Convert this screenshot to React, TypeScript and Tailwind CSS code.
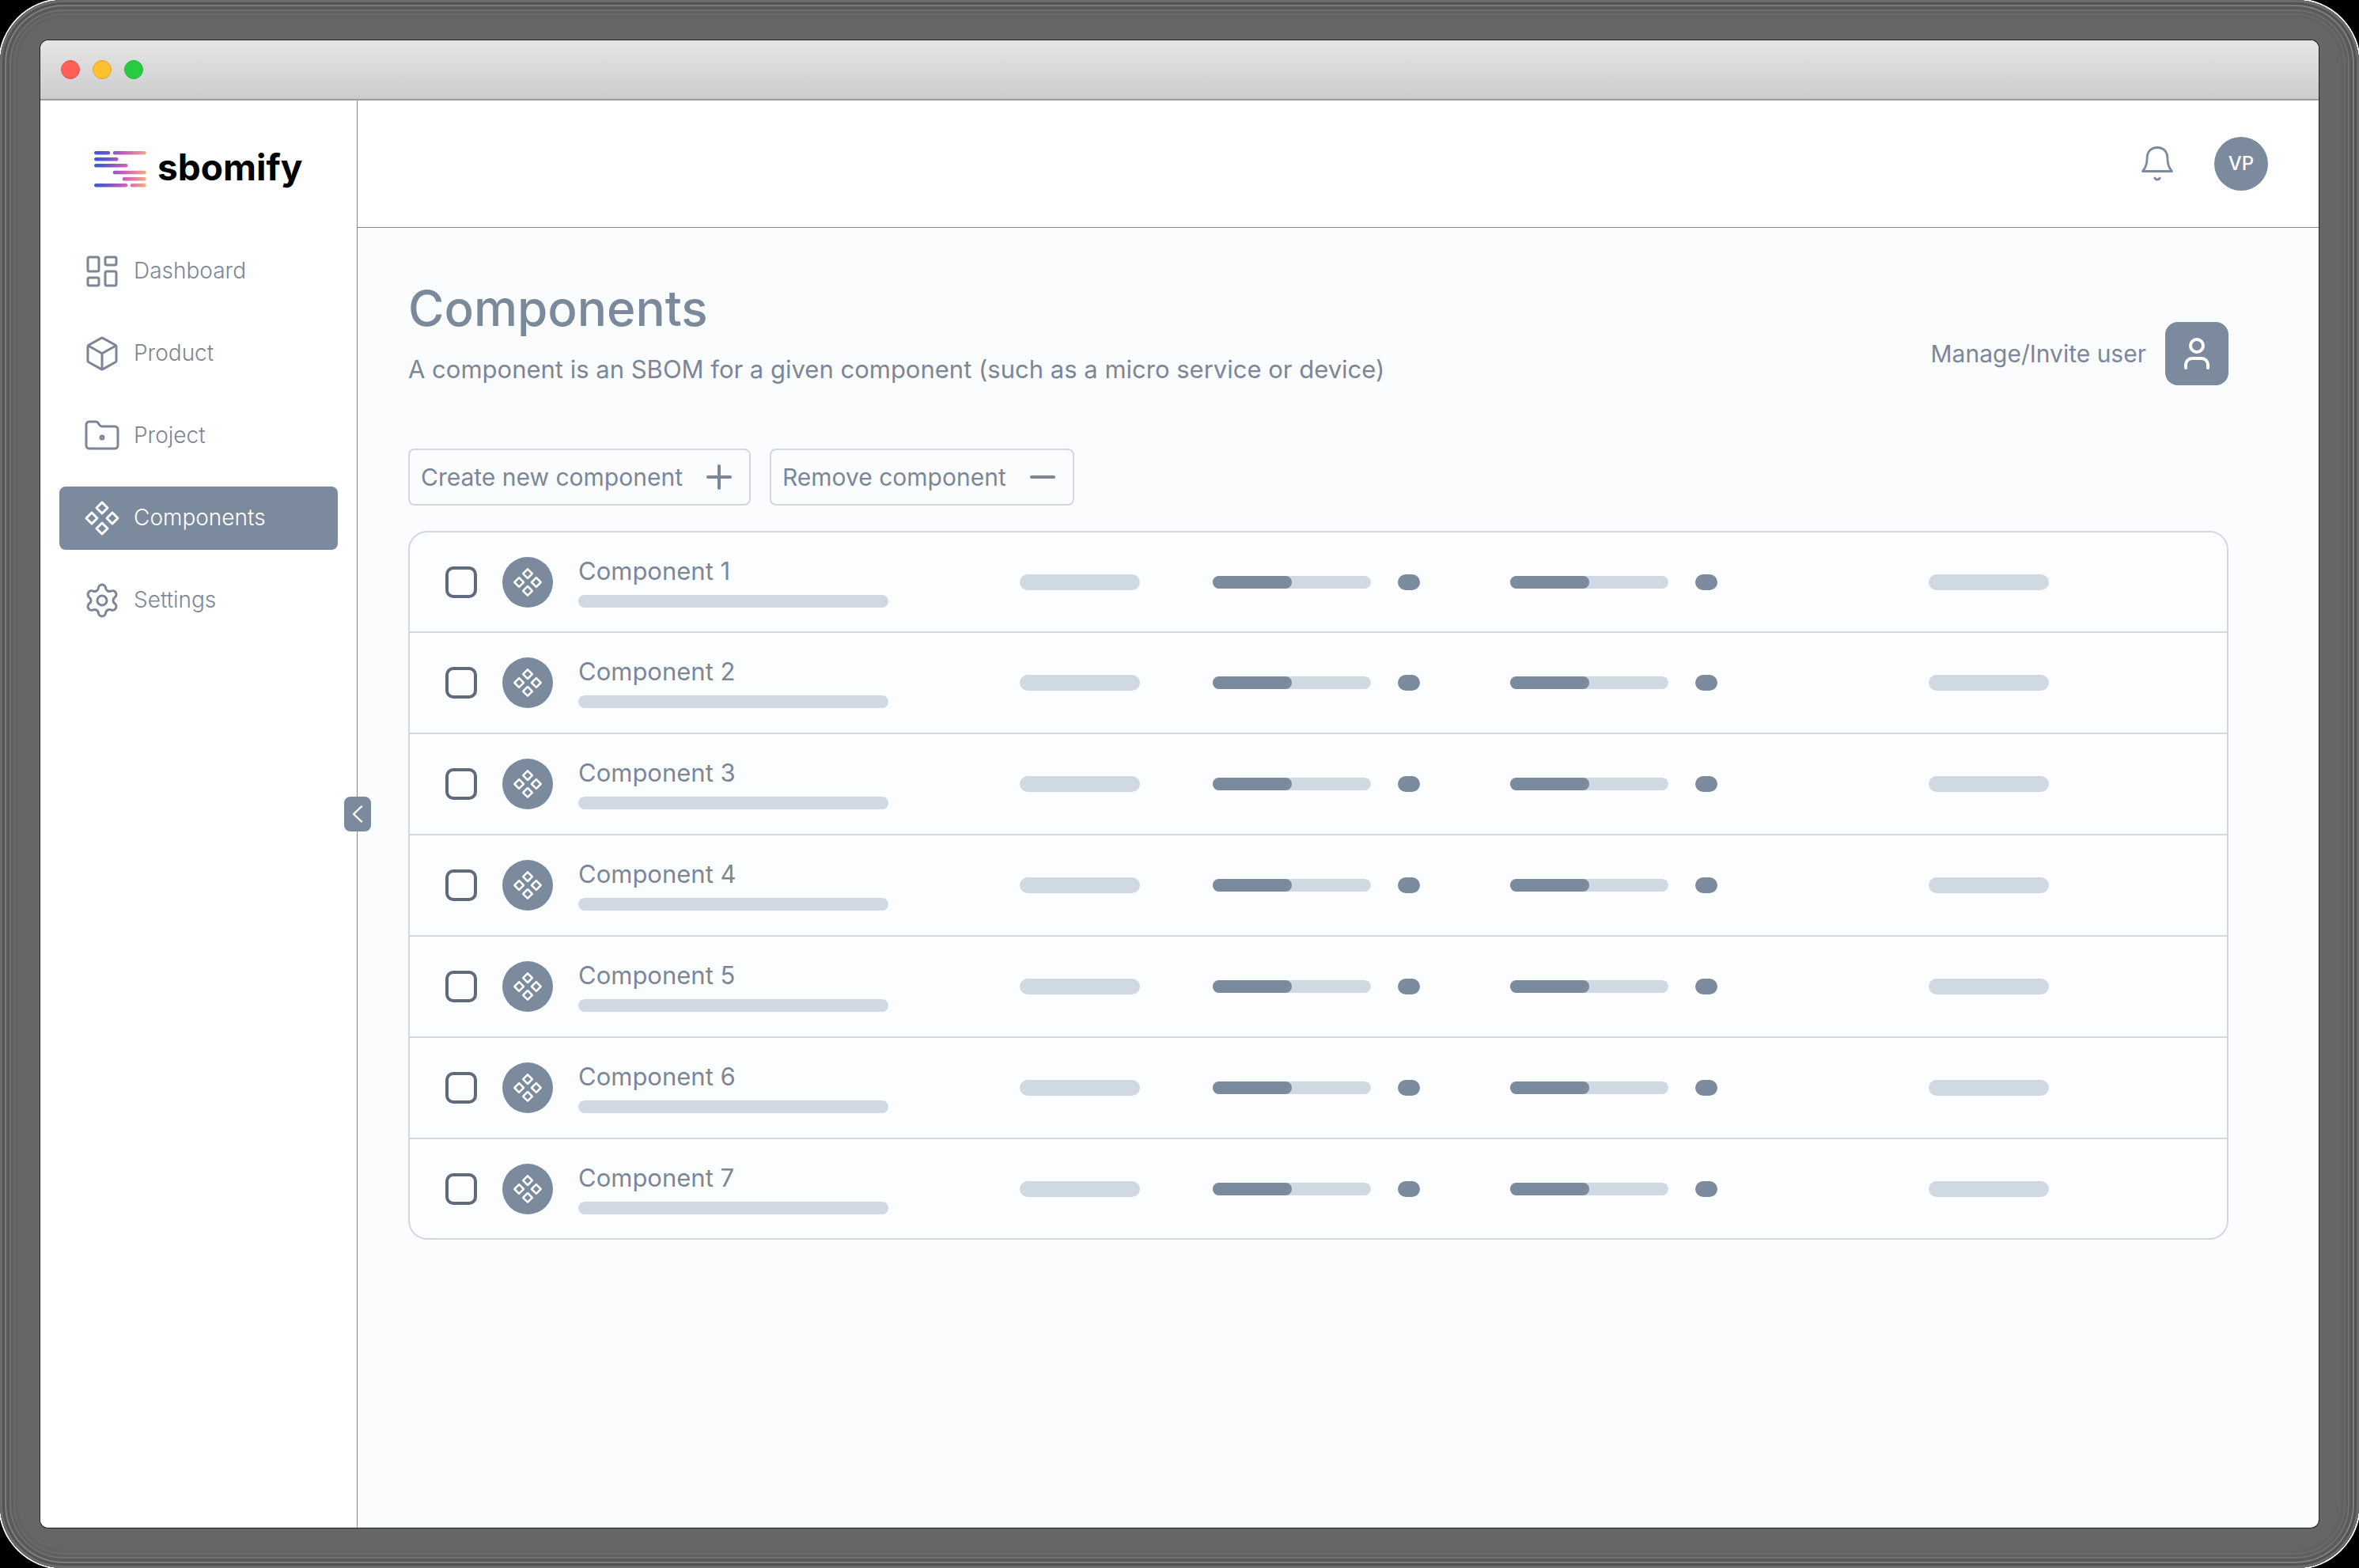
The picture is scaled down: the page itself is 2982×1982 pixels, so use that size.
import type { ReactNode } from "react";
import { FolderDot, LayoutDashboard, Settings, User } from "lucide-react";

function ComponentIcon({ className }: { className: string }) {
  return (
    <svg viewBox="0 0 24 24" fill="none" stroke="currentColor" strokeWidth="1.5" className={className} aria-hidden="true">
      <path d="M5.5 8.5 9 12l-3.5 3.5L2 12Z" strokeLinejoin="round" />
      <path d="m12 2 3.5 3.5L12 9 8.5 5.5Z" strokeLinejoin="round" />
      <path d="M18.5 8.5 22 12l-3.5 3.5L15 12Z" strokeLinejoin="round" />
      <path d="m12 15 3.5 3.5L12 22l-3.5-3.5Z" strokeLinejoin="round" />
    </svg>
  );
}

function BoxIcon({ className }: { className: string }) {
  return (
    <svg viewBox="0 0 24 24" fill="none" stroke="currentColor" strokeWidth="1.5" strokeLinecap="round" strokeLinejoin="round" className={className} aria-hidden="true">
      <path d="M11.5 2.2a1 1 0 0 1 1 0l8 4.45a1 1 0 0 1 .5.87v8.96a1 1 0 0 1-.5.87l-8 4.45a1 1 0 0 1-1 0l-8-4.45a1 1 0 0 1-.5-.87V7.52a1 1 0 0 1 .5-.87Z" />
      <path d="m3.3 7 8.7 4.9L20.7 7" />
      <path d="M12 21.8V11.9" />
    </svg>
  );
}

function BellIcon({ className }: { className: string }) {
  return (
    <svg viewBox="0 0 48 48" fill="none" stroke="currentColor" strokeWidth="2.8" strokeLinecap="round" strokeLinejoin="round" className={className} aria-hidden="true">
      <path d="M5.5 33.5h37c-4-4.500-5.600-10-5.600-16.500C36.900 8.500 31.500 3.500 24 3.500S11.100 8.500 11.100 17c0 6.500-1.600 12-5.600 16.500Z" />
      <path d="M20.8 42.2c.9 1.300 1.900 1.900 3.200 1.900s2.300-.6 3.200-1.900" strokeWidth="3" />
    </svg>
  );
}

function Logo() {
  return (
    <svg viewBox="0 0 66 48" fill="none" strokeWidth="4.6" strokeLinecap="round" stroke="url(#brand)" className="h-12 w-[66px]" aria-hidden="true">
      <defs>
        <linearGradient id="brand" gradientUnits="userSpaceOnUse" x1="0" y1="24" x2="66" y2="26">
          <stop offset="0" stopColor="#3f5bcc" />
          <stop offset="0.2" stopColor="#5b58cb" />
          <stop offset="0.55" stopColor="#c659b9" />
          <stop offset="0.75" stopColor="#de7aa6" />
          <stop offset="1" stopColor="#f3ad84" />
        </linearGradient>
      </defs>
      <path d="M2.3 2.3H18M26 2.3h37.500M2.3 10.300h26M2.3 18.300h38M26 27h37.500M38 35.300h25.500M2.3 43.300h37.700M48 43.300h15.500" />
    </svg>
  );
}

const navItems: { label: string; icon: ReactNode; active?: boolean }[] = [
  { label: "Dashboard", icon: <LayoutDashboard size={48} strokeWidth={1.5} /> },
  { label: "Product", icon: <BoxIcon className="size-12" /> },
  { label: "Project", icon: <FolderDot size={48} strokeWidth={1.5} /> },
  { label: "Components", icon: <ComponentIcon className="size-12" />, active: true },
  { label: "Settings", icon: <Settings size={48} strokeWidth={1.5} /> },
];

function TitleBar() {
  return (
    <div className="flex h-[76px] shrink-0 items-center gap-4 border-b-2 border-[#9c9c9c] bg-linear-to-b from-[#e6e6e6] to-[#cccccc] px-[26px]">
      <button aria-label="Close" className="size-6 rounded-full border border-[#e2554e] bg-[#ff5f57]" />
      <button aria-label="Minimize" className="size-6 rounded-full border border-[#e0a32e] bg-[#ffc02f]" />
      <button aria-label="Zoom" className="size-6 rounded-full border border-[#24b33a] bg-[#28cc42]" />
    </div>
  );
}

function Sidebar() {
  return (
    <aside className="relative flex w-[401px] shrink-0 flex-col border-r border-[#85888c] bg-white px-6">
      <a href="#home" className="mt-16 ml-11 flex h-12 items-start gap-3.5 text-black">
        <Logo />
        <span className="text-[46px] leading-10 font-bold">sbomify</span>
      </a>
      <nav className="mt-16 flex flex-col gap-6">
        {navItems.map((item) => (
          <a
            key={item.label}
            href={"#" + item.label.toLowerCase()}
            aria-current={item.active ? "page" : undefined}
            className={
              item.active
                ? "flex h-20 items-center gap-4 rounded-lg bg-[#7b8a9d] px-[30px] text-[28px] font-light text-white"
                : "flex h-20 items-center gap-4 rounded-lg px-[30px] text-[28px] font-light text-[#7d8696]"
            }
          >
            {item.icon}
            <span className="pb-0.5">{item.label}</span>
          </a>
        ))}
      </nav>
      <button
        aria-label="Collapse sidebar"
        className="absolute top-1/2 -right-px flex h-11 w-[34px] translate-x-1/2 -translate-y-1/2 items-center justify-center rounded-lg bg-[#7b8a9d] text-white"
      >
        <svg viewBox="0 0 14 24" fill="none" stroke="currentColor" strokeWidth="2.4" strokeLinecap="round" strokeLinejoin="round" className="h-6 w-3.5" aria-hidden="true">
          <path d="M12 2.5 2 12l10 9.500" />
        </svg>
      </button>
    </aside>
  );
}

function Meter() {
  return (
    <div className="flex items-center gap-[34px]">
      <div className="h-4 w-[200px] rounded-full bg-[#d0d9e1]">
        <div className="h-4 w-1/2 rounded-full bg-[#7b8a9d]" />
      </div>
      <div className="h-5 w-7 rounded-full bg-[#7b8a9d]" />
    </div>
  );
}

function ComponentRow({ index }: { index: number }) {
  const id = "component-" + index;
  return (
    <tr className="h-32 border-b-2 border-[#d3d8dd] first:h-[126px] last:h-[126px] last:border-b-0">
      <td className="p-0 pl-[45px]">
        <div className="flex items-center gap-8">
          <input
            id={id}
            type="checkbox"
            className="size-10 shrink-0 appearance-none rounded-[10px] border-4 border-[#5f6b7c] bg-[#fcfdff] checked:bg-[#5f6b7c]"
          />
          <div className="flex size-16 shrink-0 items-center justify-center rounded-full bg-[#7b8a9d] text-white">
            <ComponentIcon className="size-10" />
          </div>
          <div className="flex flex-col gap-3">
            <label htmlFor={id} className="text-[31px] leading-9">
              Component {index}
            </label>
            <div className="h-4 w-[392px] rounded-full bg-[#d0d9e1]" />
          </div>
        </div>
      </td>
      <td className="p-0">
        <div className="h-5 w-[152px] rounded-full bg-[#d0d9e1]" />
      </td>
      <td className="p-0">
        <Meter />
      </td>
      <td className="p-0">
        <Meter />
      </td>
      <td className="p-0">
        <div className="h-5 w-[152px] rounded-full bg-[#d0d9e1]" />
      </td>
    </tr>
  );
}

export default function App() {
  return (
    <div className="min-h-screen bg-black font-['Inter','Liberation_Sans',sans-serif] text-[#7b8798]">
      <div className="flex min-h-screen flex-col rounded-[80px] bg-[#666666] p-[51px] shadow-[0_0_0_2px_#ffffff,inset_0_0_0_3px_#6c6c6c,inset_0_0_0_6px_#525252,inset_0_0_0_8px_#7e7e7e,inset_0_0_0_12px_#5a5a5a,inset_0_0_0_14px_#707070,inset_0_0_0_17px_#5f5f5f,inset_0_0_0_19px_#6a6a6a,inset_0_0_0_23px_#626262]">
        <div className="flex flex-1 flex-col overflow-hidden rounded-[10px] bg-[#fafcfe] shadow-[0_0_0_1px_#222222]">
          <TitleBar />
          <div className="flex flex-1">
            <Sidebar />
            <div className="flex min-w-0 flex-1 flex-col">
              <header className="flex h-[161px] shrink-0 items-center justify-end gap-12 border-b border-[#85888c] bg-white pr-16">
                <button aria-label="Notifications" className="text-[#7b8a9d]">
                  <BellIcon className="size-12" />
                </button>
                <button className="flex size-[68px] items-center justify-center rounded-full bg-[#7b8a9d] text-[24px] font-medium text-white">
                  VP
                </button>
              </header>
              <main className="flex flex-col pr-[114px] pl-16">
                <div className="flex items-end justify-between pt-16">
                  <div>
                    <h1 className="text-[62px] leading-[75px] font-medium text-[#7b8a9a]">Components</h1>
                    <p className="mt-5 text-[31px] leading-10">
                      A component is an SBOM for a given component (such as a micro service or device)
                    </p>
                  </div>
                  <div className="flex items-center gap-6">
                    <span id="invite" className="text-[30px] leading-10">
                      Manage/Invite user
                    </span>
                    <button aria-labelledby="invite" className="flex size-20 items-center justify-center rounded-2xl bg-[#7b8a9d] text-white">
                      <User size={48} strokeWidth={2} />
                    </button>
                  </div>
                </div>
                <div className="mt-20 flex gap-6">
                  <button className="flex h-[72px] items-center gap-[30px] rounded-lg border-2 border-[#d3d8dd] pr-[22px] pl-3.5 text-[30px]">
                    Create new component
                    <svg viewBox="0 0 32 32" stroke="currentColor" strokeWidth="4" strokeLinecap="round" className="size-8" aria-hidden="true">
                      <path d="M16 2v28M2 16h28" />
                    </svg>
                  </button>
                  <button className="flex h-[72px] items-center gap-[30px] rounded-lg border-2 border-[#d3d8dd] pr-[22px] pl-3.5 text-[30px]">
                    Remove component
                    <svg viewBox="0 0 32 32" stroke="currentColor" strokeWidth="4" strokeLinecap="round" className="size-8" aria-hidden="true">
                      <path d="M2 16h28" />
                    </svg>
                  </button>
                </div>
                <div className="mt-8 overflow-hidden rounded-3xl border-2 border-[#d3d8dd] bg-[#fcfdff]">
                  <table className="w-full table-fixed border-collapse" aria-label="Components">
                    <colgroup>
                      <col className="w-[771px]" />
                      <col className="w-[244px]" />
                      <col className="w-[376px]" />
                      <col className="w-[529px]" />
                      <col />
                    </colgroup>
                    <tbody>
                      {[1, 2, 3, 4, 5, 6, 7].map((n) => (
                        <ComponentRow key={n} index={n} />
                      ))}
                    </tbody>
                  </table>
                </div>
              </main>
            </div>
          </div>
        </div>
      </div>
    </div>
  );
}
